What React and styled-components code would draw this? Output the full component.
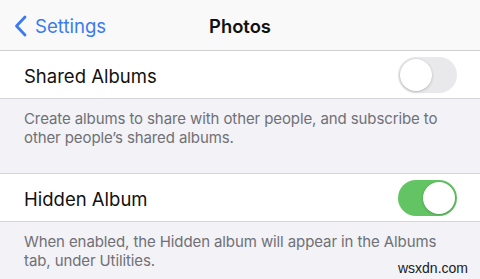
import styled, { createGlobalStyle } from "styled-components";

const Global = createGlobalStyle`
  body {
    margin: 0;
    background: #f2f2f7;
    font-family: Inter, "Noto Sans", sans-serif;
    -webkit-font-smoothing: antialiased;
  }
`;

const Page = styled.div`
  position: relative;
  width: 480px;
  height: 279px;
  overflow: hidden;
  background: #f2f2f7;
`;

const NavBar = styled.div`
  height: 50px;
  display: grid;
  grid-template-columns: 1fr auto 1fr;
  align-items: center;
  background: #f9f9f9;
  border-bottom: 1px solid #cfcfd2;
`;

const Back = styled.div`
  display: flex;
  align-items: center;
  gap: 8px;
  padding-left: 14px;
  padding-top: 1px;
  color: #3a7bf0;
  font-size: 18.6px;
`;

const Title = styled.div`
  font-size: 18.4px;
  font-weight: 600;
  color: #111;
  padding-top: 1px;
`;

const Row = styled.div`
  height: 47px;
  display: flex;
  align-items: center;
  justify-content: space-between;
  padding: 0 23px 0 24px;
  background: #fff;
  border-bottom: 1px solid #d6d6da;
  border-top: ${(p) => (p.$top ? "1px solid #d6d6da" : "none")};
`;

const Label = styled.span`
  padding-top: 3px;
  font-size: 18.5px;
  color: #111;
`;

const Footer = styled.div`
  height: ${(p) => p.$h}px;
  box-sizing: border-box;
  padding: 10px 30px 0 24px;
  font-size: 15px;
  letter-spacing: -0.1px;
  line-height: 19px;
  color: #707075;
`;

const Switch = styled.div`
  position: relative;
  width: 59px;
  height: 36px;
  border-radius: 18px;
  background: ${(p) => (p.$on ? "#62c462" : "#e9e9eb")};
`;

const Knob = styled.div`
  position: absolute;
  top: 2px;
  left: ${(p) => (p.$on ? "25px" : "2px")};
  width: 32px;
  height: 32px;
  border-radius: 50%;
  background: #fff;
  box-shadow: 0 1px 3px rgba(0, 0, 0, 0.18), 0 0 0 0.5px rgba(0, 0, 0, 0.06);
`;

const Mark = styled.div`
  position: absolute;
  right: 12px;
  bottom: 3px;
  font-family: "Liberation Sans", Arial, sans-serif;
  font-size: 14px;
  color: #1a1a1a;
`;

const Toggle = ({ on }) => (
  <Switch $on={on}>
    <Knob $on={on} />
  </Switch>
);

export default function App() {
  return (
    <Page>
      <Global />
      <NavBar>
        <Back>
          <svg width="13" height="22" viewBox="0 0 13 22">
            <path d="M11 2 L2.5 11 L11 20" fill="none" stroke="#3a7bf0" strokeWidth="2.8" strokeLinecap="round" strokeLinejoin="round" />
          </svg>
          Settings
        </Back>
        <Title>Photos</Title>
        <div />
      </NavBar>
      <Row>
        <Label>Shared Albums</Label>
        <Toggle />
      </Row>
      <Footer $h={74}>
        Create albums to share with other people, and subscribe to other people’s shared albums.
      </Footer>
      <Row $top>
        <Label>Hidden Album</Label>
        <Toggle on />
      </Row>
      <Footer $h={60}>
        When enabled, the Hidden album will appear in the Albums tab, under Utilities.
      </Footer>
      <Mark>wsxdn.com</Mark>
    </Page>
  );
}
